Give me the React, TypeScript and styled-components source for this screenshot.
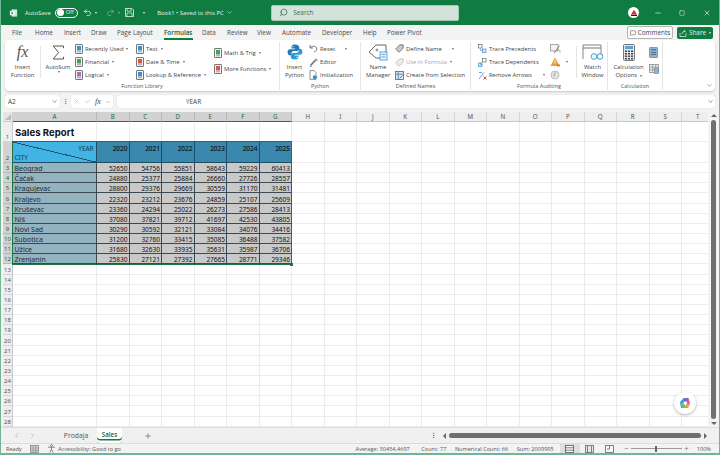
import React from "react";
import styled, { createGlobalStyle, css } from "styled-components";
import {
    ChevronDown,
    ChevronLeft,
    ChevronRight,
    Check,
    Minus,
    MessageSquare,
    MoreVertical,
    Plus,
    Redo2,
    Search,
    Square,
    Undo2,
    X,
} from "lucide-react";

const UI_FONT = `"Open Sans", "Noto Sans", sans-serif`;
const GREEN = "#107c41";

const GlobalStyle = createGlobalStyle`
    html, body {
        margin: 0;
        padding: 0;
        width: 720px;
        height: 455px;
        overflow: hidden;
        background: #f3f3f3;
    }
    * {
        box-sizing: border-box;
    }
`;

const Window = styled.div`
    width: 720px;
    height: 455px;
    display: flex;
    flex-direction: column;
    background: #f3f3f3;
    border-left: 1px solid #6fb596;
    border-right: 1px solid #6fb596;
    border-bottom: 2px solid #6fb596;
    font-family: ${UI_FONT};
    font-size: 6.4px;
    color: #444;
    overflow: hidden;
`;

/* title bar */

const TitleBar = styled.div`
    height: 25px;
    flex: none;
    background: ${GREEN};
    color: #e8f2ec;
    display: flex;
    align-items: center;
    padding-left: 8px;
    font-size: 5.9px;
`;

const AppBadge = styled.div`
    width: 9px;
    height: 9px;
    margin-right: 7px;
    display: flex;
    align-items: center;
    justify-content: center;
`;

const Toggle = styled.div`
    width: 23px;
    height: 10px;
    margin-left: 4px;
    margin-right: 5px;
    border: 1px solid #fff;
    border-radius: 6px;
    display: flex;
    align-items: center;
    padding-left: 1px;
    gap: 2px;
    font-size: 5.6px;
    line-height: 1;
    &::before {
        content: "";
        width: 7px;
        height: 7px;
        border-radius: 50%;
        background: #fff;
    }
`;

const QuickIcons = styled.div`
    display: flex;
    align-items: center;
    gap: 2px;
    width: 74.5px;
    flex: none;
`;

const QuickGap = styled.span<{ $width: number }>`
    width: ${(p) => p.$width}px;
    flex: none;
`;

const DocTitle = styled.div`
    width: 114px;
    flex: none;
    display: flex;
    align-items: center;
    gap: 2px;
    white-space: nowrap;
`;

const SearchBox = styled.div`
    width: 188px;
    height: 16px;
    background: #d2e4d9;
    border: 1px solid #a7c9b5;
    border-radius: 2px;
    display: flex;
    align-items: center;
    gap: 5px;
    padding-left: 7px;
    font-size: 6.4px;
    color: #3c6a50;
`;

const TitleRight = styled.div`
    margin-left: auto;
    display: flex;
    align-items: center;
`;

const Avatar = styled.div`
    width: 11px;
    height: 11px;
    border-radius: 50%;
    background: #fff;
    display: flex;
    align-items: center;
    justify-content: center;
    margin-right: 6.5px;
`;

const WindowButton = styled.div`
    width: 24.5px;
    display: flex;
    justify-content: center;
`;

/* ribbon tabs */

const TabBar = styled.div`
    height: 15px;
    flex: none;
    display: flex;
    align-items: center;
    padding-left: 11px;
    font-size: 6.3px;
    color: #4a4a4a;
`;

const RibbonTab = styled.div<{ $width: number; $active?: boolean }>`
    width: ${(p) => p.$width}px;
    height: 15px;
    line-height: 15px;
    flex: none;
    white-space: nowrap;
    ${(p) =>
        p.$active &&
        css`
            font-weight: 600;
            color: #1d5c3a;
        `}
`;

const TabUnderline = styled.div`
    width: 29px;
    height: 1.5px;
    background: ${GREEN};
    margin-top: -2px;
`;

const TabActions = styled.div`
    margin-left: auto;
    display: flex;
    align-items: center;
    gap: 4px;
    padding-right: 6px;
    font-size: 6.4px;
`;

const CommentsButton = styled.div`
    width: 46px;
    height: 13px;
    background: #fafafa;
    border: 1px solid #b5b5b5;
    border-radius: 2px;
    display: flex;
    align-items: center;
    justify-content: center;
    gap: 2px;
`;

const ShareButton = styled.div`
    width: 36px;
    height: 12px;
    background: ${GREEN};
    color: #e8f2ec;
    border-radius: 2px;
    display: flex;
    align-items: center;
    justify-content: center;
    gap: 2px;
`;

/* ribbon */

const Ribbon = styled.div`
    height: 51px;
    flex: none;
    margin: 0 4px;
    background: #fff;
    border-radius: 4px;
    box-shadow: 0 1px 2px rgba(0, 0, 0, 0.18);
    display: flex;
    position: relative;
    font-size: 5.85px;
`;

const Group = styled.div<{ $width: number }>`
    width: ${(p) => p.$width}px;
    flex: none;
    display: flex;
    flex-direction: column;
    margin: 2px 0 1px;
    border-right: 1px solid #e4e4e4;
`;

const GroupBody = styled.div`
    height: 40px;
    flex: none;
    display: flex;
`;

const GroupLabel = styled.div`
    height: 8px;
    line-height: 8px;
    text-align: center;
    font-size: 5.5px;
    color: #555;
`;

const LargeCommand = styled.div<{ $width: number }>`
    width: ${(p) => p.$width}px;
    flex: none;
    display: flex;
    flex-direction: column;
    align-items: center;
    text-align: center;
    line-height: 8px;
    padding-top: 1px;
`;

const LargeIcon = styled.div`
    height: 18px;
    margin-bottom: 1.5px;
    display: flex;
    align-items: center;
    justify-content: center;
`;

const InnerDivider = styled.div`
    width: 1px;
    height: 32px;
    margin-top: 4px;
    background: #e4e4e4;
    flex: none;
`;

const Stack = styled.div<{ $width?: number; $spread?: boolean; $inset?: number }>`
    ${(p) => (p.$width ? `width: ${p.$width}px; flex: none;` : "flex: 1;")}
    display: flex;
    flex-direction: column;
    justify-content: ${(p) => (p.$spread ? "center" : "flex-start")};
    gap: ${(p) => (p.$spread ? "3px" : "0")};
    padding-bottom: ${(p) => (p.$spread ? "2px" : "0")};
    padding-left: ${(p) => p.$inset ?? 0}px;
`;

const SmallCommand = styled.div<{ $disabled?: boolean }>`
    height: 13.4px;
    flex: none;
    display: flex;
    align-items: center;
    gap: 2px;
    white-space: nowrap;
    color: ${(p) => (p.$disabled ? "#a8a8a8" : "#444")};
`;

const Caret = styled.span<{ $color?: string; $offset?: number }>`
    width: 0;
    height: 0;
    margin-left: ${(p) => p.$offset ?? 1}px;
    border-left: 1.6px solid transparent;
    border-right: 1.6px solid transparent;
    border-top: 2px solid ${(p) => p.$color ?? "#666"};
    display: inline-block;
    flex: none;
`;

const CollapseRibbon = styled.div`
    position: absolute;
    right: 2px;
    bottom: 2px;
    color: #666;
    display: flex;
`;

/* formula bar */

const FormulaBar = styled.div`
    height: 13px;
    flex: none;
    margin: 4px;
    display: flex;
    align-items: stretch;
`;

const NameBox = styled.div`
    width: 55px;
    background: #fff;
    border-radius: 2px;
    box-shadow: 0 0 1px rgba(0, 0, 0, 0.25);
    display: flex;
    align-items: center;
    justify-content: space-between;
    padding: 0 2px 0 3px;
`;

const BarGrip = styled.div`
    width: 11px;
    display: flex;
    align-items: center;
    justify-content: center;
    color: #777;
`;

const FormulaActions = styled.div`
    width: 42px;
    background: #fff;
    border-radius: 2px;
    box-shadow: 0 0 1px rgba(0, 0, 0, 0.25);
    display: flex;
    align-items: center;
    gap: 4px;
    padding-left: 2px;
    color: #bbb;
`;

const FxMark = styled.span`
    font-family: "Liberation Serif", serif;
    font-style: italic;
    font-size: 8px;
    color: #444;
`;

const FormulaInput = styled.div`
    flex: 1;
    margin-left: 4px;
    background: #fff;
    border-radius: 2px;
    box-shadow: 0 0 1px rgba(0, 0, 0, 0.25);
    display: flex;
    align-items: center;
    justify-content: space-between;
    padding: 0 1px 0 69px;
`;

/* sheet */

const SheetArea = styled.div`
    flex: 1;
    min-height: 0;
    display: flex;
    margin-left: 2px;
    background: #fff;
    position: relative;
`;

const SheetGrid = styled.div`
    flex: 1;
    min-width: 0;
    overflow: hidden;
    position: relative;
    display: grid;
    grid-template-columns: 10px 84px repeat(19, 32.5px);
    grid-template-rows: 10px 20px 21px repeat(26, 10.15px);
    align-content: start;
    font-family: "Noto Sans", "Open Sans", sans-serif;
    font-size: 6.5px;
    color: #111;
`;

const CornerCell = styled.div`
    background: #e6e6e6;
    border-right: 1px solid #cfcfcf;
    border-bottom: 1px solid #cfcfcf;
    display: flex;
    align-items: flex-end;
    justify-content: flex-end;
    padding: 0 1px 1px 0;
    &::after {
        content: "";
        border-left: 6px solid transparent;
        border-bottom: 6px solid #bdbdbd;
    }
`;

const ColHead = styled.div<{ $selected: boolean }>`
    background: ${(p) => (p.$selected ? "#d2d2d2" : "#eeeeee")};
    border-right: 1px solid ${(p) => (p.$selected ? "#b8b8b8" : "#d5d5d5")};
    border-bottom: 1px solid ${(p) => (p.$selected ? "#217346" : "#c8c8c8")};
    color: ${(p) => (p.$selected ? "#1c6a41" : "#555")};
    display: flex;
    align-items: center;
    justify-content: center;
    font-size: 6.2px;
    overflow: hidden;
`;

const RowHead = styled.div<{ $selected: boolean }>`
    background: ${(p) => (p.$selected ? "#d2d2d2" : "#eeeeee")};
    border-right: 1px solid ${(p) => (p.$selected ? "#217346" : "#c8c8c8")};
    border-bottom: 1px solid ${(p) => (p.$selected ? "#b8b8b8" : "#d5d5d5")};
    color: ${(p) => (p.$selected ? "#1c6a41" : "#555")};
    display: flex;
    align-items: flex-end;
    justify-content: center;
    font-size: 6px;
    line-height: 7px;
    overflow: hidden;
`;

const Blank = styled.div`
    border-right: 1px solid #ececec;
    border-bottom: 1px solid #ececec;
`;

const TitleCell = styled(Blank)`
    font-family: "Inter", "Noto Sans", sans-serif;
    font-weight: 700;
    font-size: 9.6px;
    color: #111;
    display: flex;
    align-items: center;
    padding-left: 2px;
    padding-top: 2px;
    white-space: nowrap;
`;

const DataCell = styled.div<{ $variant: "year" | "city" | "num" }>`
    display: flex;
    padding: 0 1px 0 1.5px;
    line-height: 7px;
    white-space: nowrap;
    overflow: hidden;
    border-right: 1px solid #3d4a52;
    border-bottom: 1px solid #3d4a52;
    ${(p) =>
        p.$variant === "year" &&
        css`
            background: #3a88ad;
            justify-content: flex-end;
            font-weight: 500;
            padding-top: 2.5px;
            border-right-color: #1f4d66;
            border-bottom-color: #1f4d66;
        `}
    ${(p) =>
        p.$variant === "city" &&
        css`
            background: #94b3c1;
            align-items: flex-end;
            color: #1f2c33;
            font-size: 7px;
        `}
    ${(p) =>
        p.$variant === "num" &&
        css`
            background: #c9c9c9;
            justify-content: flex-end;
            align-items: flex-end;
        `}
`;

const DiagonalCell = styled.div`
    background:
        linear-gradient(
            to top right,
            transparent calc(50% - 0.6px),
            #24506a calc(50% - 0.6px),
            #24506a calc(50% + 0.4px),
            transparent calc(50% + 0.4px)
        ),
        #41b3e4;
    border-right: 1px solid #1f4d66;
    border-bottom: 1px solid #1f4d66;
    color: #1c3a4c;
    display: flex;
    flex-direction: column;
    justify-content: space-between;
    padding: 1px 1.5px 0;
    line-height: 8px;
    font-size: 6.4px;
`;

const YearLabel = styled.div`
    text-align: right;
    padding-right: 1px;
    margin-top: 2px;
`;

const Selection = styled.div`
    position: absolute;
    inset: -1px 0 -1px -1px;
    grid-column: 2 / 9;
    grid-row: 3 / 14;
    border: 1px solid #217346;
    pointer-events: none;
    &::after {
        content: "";
        position: absolute;
        right: -2px;
        bottom: -2px;
        width: 3px;
        height: 3px;
        background: #217346;
    }
`;

const VScroll = styled.div`
    width: 11px;
    flex: none;
    display: flex;
    flex-direction: column;
    align-items: center;
    background: #f3f3f3;
    padding: 2px 0;
    gap: 3px;
`;

const VThumb = styled.div`
    flex: 1;
    width: 5px;
    background: #6f6f6f;
    border-radius: 3px;
`;

const ArrowUp = styled.div`
    border-left: 3px solid transparent;
    border-right: 3px solid transparent;
    border-bottom: 3.5px solid #666;
    flex: none;
`;

const ArrowDown = styled.div`
    border-left: 3px solid transparent;
    border-right: 3px solid transparent;
    border-top: 3.5px solid #666;
    flex: none;
`;

const CopilotButton = styled.div`
    position: absolute;
    right: 23px;
    bottom: 13px;
    width: 22px;
    height: 22px;
    border-radius: 50%;
    background: #fff;
    box-shadow: 0 1px 3px rgba(0, 0, 0, 0.3);
    display: flex;
    align-items: center;
    justify-content: center;
`;

/* sheet tabs and status bar */

const SheetTabs = styled.div`
    height: 16px;
    flex: none;
    display: flex;
    align-items: center;
    background: #f0f0f0;
    border-top: 1px solid #dedede;
    padding-left: 12px;
    color: #999;
`;

const NavArrows = styled.div`
    width: 47px;
    flex: none;
    display: flex;
    gap: 9px;
`;

const SheetTab = styled.div<{ $active?: boolean; $width: number }>`
    width: ${(p) => p.$width}px;
    height: 15px;
    flex: none;
    display: flex;
    align-items: center;
    justify-content: center;
    font-size: 6.8px;
    color: #555;
    margin-right: ${(p) => (p.$active ? 0 : 5)}px;
    ${(p) =>
        p.$active &&
        css`
            background: #fff;
            color: #1d5c3a;
            font-weight: 600;
            border-radius: 0 0 3px 3px;
            box-shadow: inset 0 -2.5px 0 #fff, inset 0 -4px 0 ${GREEN};
            font-size: 6.2px;
            padding-bottom: 2px;
        `}
`;

const AddSheet = styled.div`
    margin-left: 22px;
    display: flex;
    color: #666;
`;

const HScrollArea = styled.div`
    margin-left: auto;
    display: flex;
    align-items: center;
    gap: 3px;
    width: 289px;
    padding-right: 12px;
    color: #666;
    & > svg {
        margin-right: 3px;
    }
`;

const HThumb = styled.div`
    flex: 1;
    height: 5px;
    background: #6f6f6f;
    border-radius: 3px;
`;

const ArrowLeft = styled.div`
    border-top: 3px solid transparent;
    border-bottom: 3px solid transparent;
    border-right: 3.5px solid #666;
    flex: none;
`;

const ArrowRight = styled.div`
    border-top: 3px solid transparent;
    border-bottom: 3px solid transparent;
    border-left: 3.5px solid #666;
    flex: none;
`;

const StatusBar = styled.div`
    height: 10px;
    flex: none;
    display: flex;
    align-items: center;
    border-top: 1px solid #dcdcdc;
    background: #f3f3f3;
    padding-left: 5px;
    font-size: 5.6px;
    color: #555;
    white-space: nowrap;
`;

const StatusLeft = styled.div`
    display: flex;
    align-items: center;
    gap: 8px;
`;

const Accessibility = styled.div`
    display: flex;
    align-items: center;
    gap: 2px;
`;

const StatusStats = styled.div`
    margin-left: auto;
    display: flex;
    align-items: center;
    gap: 8.5px;
`;

const AverageStat = styled.span`
    margin-right: 3px;
`;

const ViewButtons = styled.div`
    margin-left: 6px;
    display: flex;
    align-items: center;
`;

const ViewButton = styled.div<{ $active?: boolean }>`
    width: 20px;
    height: 9px;
    display: flex;
    align-items: center;
    justify-content: center;
    background: ${(p) => (p.$active ? "#dedede" : "transparent")};
`;

const Zoom = styled.div`
    margin-left: 4px;
    display: flex;
    align-items: center;
    gap: 2px;
    padding-right: 8px;
`;

const ZoomTrack = styled.div`
    width: 51px;
    height: 1px;
    background: #999;
    display: flex;
    align-items: center;
    justify-content: center;
    &::after {
        content: "";
        width: 2px;
        height: 6px;
        background: #666;
    }
`;

const ZoomValue = styled.span`
    margin-left: 6px;
`;

/* icons */

const Book = ({ color }: { color: string }) => (
    <svg width="8" height="10" viewBox="0 0 8 10">
        <rect x="0.5" y="0.5" width="7" height="9" rx="0.5" fill="#f4f4f4" stroke="#777" />
        <rect x="2" y="2" width="4" height="4.5" fill={color} />
        <rect x="2" y="7.3" width="4" height="0.9" fill="#999" />
    </svg>
);

const Sigma = () => (
    <svg width="13" height="15" viewBox="0 0 13 15" fill="none">
        <path d="M11.5 3.2V1H1.2L6.6 7.4 1.2 14H11.5V11.8" stroke="#555" strokeWidth="1" />
    </svg>
);

const PythonLogo = () => (
    <svg width="16" height="16" viewBox="0 0 16 16">
        <path d="M8 .6C5 .6 4.6 1.7 4.6 3v1.6H8.2v.7H3C1.5 5.3.6 6.3.6 8.2c0 2 .9 3.1 2.4 3.1h1.3V9.5c0-1.3 1.1-2.4 2.5-2.4h3.4c1.1 0 2-.9 2-2V3C11.8 1.6 10.6.6 8 .6Z" fill="#1f7ab8" />
        <path d="M8 15.4c3 0 3.4-1.1 3.4-2.4v-1.6H7.8v-.7H13c1.5 0 2.4-1 2.4-2.9 0-2-.9-3.1-2.4-3.1h-1.3v1.8c0 1.3-1.1 2.4-2.5 2.4H5.8c-1.1 0-2 .9-2 2V13c0 1.4 1.2 2.4 4.2 2.4Z" fill="#2f9ad6" />
        <circle cx="6" cy="2.6" r=".7" fill="#fff" />
        <circle cx="10" cy="13.4" r=".7" fill="#fff" />
    </svg>
);

const ResetIcon = () => (
    <svg width="9" height="9" viewBox="0 0 9 9" fill="none">
        <path d="M1 1v3h3M1.3 3.8C2.6 1.8 6.3 1.5 7.5 3.8 8.3 5.5 7 7.5 5 8" stroke="#666" strokeWidth=".9" />
    </svg>
);

const PencilIcon = () => (
    <svg width="9" height="9" viewBox="0 0 9 9" fill="none">
        <path d="M1.5 7.5 6.5 2.2" stroke="#777" strokeWidth="1.8" />
        <path d="M6 1.2h2v2" stroke="#2f8fd0" strokeWidth=".9" />
        <path d="M1 8.2h1.8" stroke="#2f8fd0" strokeWidth=".9" />
    </svg>
);

const DocIcon = () => (
    <svg width="9" height="10" viewBox="0 0 9 10" fill="none">
        <path d="M1 .6h4l2 2v6.8H1z" fill="#fff" stroke="#666" strokeWidth=".7" />
        <circle cx="5.8" cy="7.2" r="2" fill="#2f8fd0" />
    </svg>
);

const TagIcon = () => (
    <svg width="20" height="18" viewBox="0 0 20 18" fill="none">
        <path d="M1 9 8 2h10v13H8z" fill="#fff" stroke="#666" strokeWidth="1" />
        <circle cx="9" cy="7" r="1" stroke="#666" strokeWidth=".8" />
        <rect x="12" y="9" width="7" height="8" fill="#eaf3fb" stroke="#3d8fd1" strokeWidth=".8" />
        <path d="M13.5 11.5h4M13.5 14h4" stroke="#3d8fd1" strokeWidth=".8" />
    </svg>
);

const SmallTagIcon = ({ dim }: { dim?: boolean }) => (
    <svg width="9" height="9" viewBox="0 0 9 9" fill="none">
        <path d="M.7 5 4.7.8h3.5v3.5L4 8.3z" fill={dim ? "#ececec" : "#c9c9c9"} stroke={dim ? "#bbb" : "#666"} strokeWidth=".8" />
    </svg>
);

const CreateSelectionIcon = () => (
    <svg width="9" height="9" viewBox="0 0 9 9" fill="none">
        <rect x=".5" y=".5" width="8" height="8" fill="#d8e8f5" stroke="#3d6f96" strokeWidth=".8" />
        <path d="M.5 3.2h8M3.2.5v8" stroke="#3d6f96" strokeWidth=".7" />
        <path d="M4.5 7.5 7.5 4.5" stroke="#b34a4a" strokeWidth=".8" />
    </svg>
);

const TraceIcon = ({ flip }: { flip?: boolean }) => (
    <svg width="9" height="9" viewBox="0 0 9 9" fill="none">
        <rect x={flip ? 4.5 : 0.5} y="0.5" width="3.5" height="3.5" fill="#fff" stroke="#666" strokeWidth=".7" />
        <rect x={flip ? 0.5 : 4.5} y="5" width="3.5" height="3.5" fill="#d8e8f5" stroke="#3d8fd1" strokeWidth=".7" />
        <path d="M2.5 4.5v2h2" stroke="#3d8fd1" strokeWidth=".6" />
    </svg>
);

const RemoveArrowsIcon = () => (
    <svg width="9" height="9" viewBox="0 0 9 9" fill="none">
        <path d="M1 8 6 1.5M1 1.5h3" stroke="#3d8fd1" strokeWidth=".8" />
        <path d="M5.5 5.5 8.5 8.5M8.5 5.5 5.5 8.5" stroke="#d13a3a" strokeWidth=".9" />
    </svg>
);

const ShowFormulasIcon = () => (
    <svg width="11" height="10" viewBox="0 0 11 10" fill="none">
        <rect x=".5" y=".5" width="7.5" height="6.5" fill="#f2f2f2" stroke="#888" strokeWidth=".7" />
        <path d="M4 9.5 9.5 1.5" stroke="#666" strokeWidth=".8" />
        <path d="M7 6h3v3" stroke="#999" strokeWidth=".7" />
    </svg>
);

const ErrorCheckIcon = () => (
    <svg width="11" height="10" viewBox="0 0 11 10">
        <path d="M5 .6 9.5 9H.5z" fill="#f0a030" />
        <path d="M5 3.5v3" stroke="#fff" strokeWidth=".9" />
        <path d="M7 7.5 10 9.5M10 7.5 7 9.5" stroke="#3d8f5c" strokeWidth=".8" />
    </svg>
);

const EvalIcon = () => (
    <svg width="10" height="10" viewBox="0 0 10 10" fill="none">
        <circle cx="5" cy="5" r="4" fill="#e8e8e8" stroke="#b0b0b0" strokeWidth=".8" />
        <path d="M4 7V3h2.4M4 5h1.8" stroke="#aaa" strokeWidth=".8" />
    </svg>
);

const WatchIcon = () => (
    <svg width="22" height="17" viewBox="0 0 22 17" fill="none">
        <path d="M1 15V1h18v9" stroke="#777" strokeWidth=".9" />
        <path d="M1 4h18" stroke="#777" strokeWidth="1" />
        <circle cx="12" cy="12.5" r="2.8" fill="#fff" stroke="#3d9bdc" strokeWidth="1" />
        <circle cx="18" cy="12.5" r="2.8" fill="#fff" stroke="#3d9bdc" strokeWidth="1" />
        <path d="M14.8 12.5h.4" stroke="#3d9bdc" />
    </svg>
);

const CalculatorIcon = () => (
    <svg width="12" height="17" viewBox="0 0 12 17">
        <rect x=".5" y=".5" width="11" height="16" rx="1" fill="#e6e6e6" stroke="#777" />
        <rect x="2" y="2" width="8" height="3" fill="#55a5de" />
        {[6.5, 9, 11.5, 14].map((y) =>
            [2, 5, 8].map((x) => <rect key={`${x}-${y}`} x={x} y={y} width="2" height="1.5" fill="#444" />),
        )}
    </svg>
);

const CalcNowIcon = () => (
    <svg width="9" height="11" viewBox="0 0 9 11">
        <rect x=".5" y=".5" width="8" height="10" rx=".6" fill="#8fb4cf" stroke="#777" strokeWidth=".7" />
        <rect x="2" y="2" width="5" height="1.5" fill="#3b83b8" />
        <path d="M2 5.5h5M2 7.5h5" stroke="#556" strokeWidth=".8" />
    </svg>
);

const CalcSheetIcon = () => (
    <svg width="10" height="10" viewBox="0 0 11 11" fill="none">
        <rect x=".5" y=".5" width="10" height="9" fill="#f0f0f0" stroke="#777" strokeWidth=".7" />
        <path d="M.5 3.5h10M.5 6.5h10M4 .5v9M7.5.5v9" stroke="#777" strokeWidth=".7" />
        <rect x="6" y="5" width="4.5" height="5.5" fill="#8fb4cf" stroke="#667" strokeWidth=".5" />
    </svg>
);

const ExcelBadge = () => (
    <svg width="10" height="10" viewBox="0 0 10 10">
        <rect x="3" y="1" width="6" height="8" fill="#cfe5d8" />
        <rect x="1" y="2.5" width="5" height="5" fill="#fff" />
        <path d="M2.5 3.5 4.5 6.5M4.5 3.5 2.5 6.5" stroke={GREEN} strokeWidth=".8" />
    </svg>
);

const SaveIcon = () => (
    <svg width="9" height="9" viewBox="0 0 9 9" fill="none">
        <path d="M.5.5H7L8.5 2v6.5h-8z" stroke="#e8f2ec" strokeWidth=".8" />
        <path d="M2.2.8v2.4h4V.8M2 8.3V5h5v3.3" stroke="#e8f2ec" strokeWidth=".7" />
    </svg>
);

const AvatarMark = () => (
    <svg width="8" height="8" viewBox="0 0 8 8">
        <path d="M4 .8 7 5.5H1z" fill="#d8321f" />
        <path d="M1 5.8h6V7H1z" fill="#222" />
    </svg>
);

const CopilotLogo = () => (
    <svg width="12" height="12" viewBox="0 0 12 12">
        <path d="M1 5 4.5 1H8L5.5 6 3.5 11H2z" fill="#3a9be0" />
        <path d="M1 6 3 11h4L5 6z" fill="#5cc46a" />
        <path d="M8 1h1.5L11 6 8.5 11H5.5L8 6z" fill="#e85aa8" />
        <path d="M6.5 1H9.5L8 5 5 4z" fill="#8a5be0" />
        <path d="M7 7h4l-2 4H6z" fill="#f0a03a" />
        <circle cx="6" cy="6" r="1.5" fill="#fff" />
    </svg>
);

const MacroIcon = () => (
    <svg width="9" height="8" viewBox="0 0 9 8">
        <rect x=".5" y=".5" width="8" height="7" fill="#d8d8d8" stroke="#777" strokeWidth=".7" />
        <path d="M.5 3h8M.5 5.3h8M3.2.5v7M5.8.5v7" stroke="#777" strokeWidth=".5" />
    </svg>
);

const AccessIcon = () => (
    <svg width="9" height="9" viewBox="0 0 9 9" fill="none">
        <circle cx="4.5" cy="1.5" r="1" stroke="#666" strokeWidth=".7" />
        <path d="M1 3.2h7M4.5 3.2v2.3L2.8 8.5M4.5 5.5 6.2 8.5" stroke="#666" strokeWidth=".8" />
    </svg>
);

const NormalViewIcon = () => (
    <svg width="9" height="8" viewBox="0 0 9 8" fill="none">
        <rect x=".5" y=".5" width="8" height="7" fill="#fff" stroke="#555" strokeWidth=".8" />
        <path d="M.5 2.8h8M.5 5.2h8" stroke="#555" strokeWidth=".8" />
    </svg>
);

const LayoutViewIcon = () => (
    <svg width="9" height="8" viewBox="0 0 9 8" fill="none">
        <rect x=".5" y=".5" width="8" height="7" fill="#e6e6e6" stroke="#666" strokeWidth=".8" />
        <path d="M2.5.5v7M6.5.5v7" stroke="#666" strokeWidth=".8" />
    </svg>
);

const BreakViewIcon = () => (
    <svg width="9" height="8" viewBox="0 0 9 8" fill="none">
        <rect x=".5" y=".5" width="8" height="7" fill="#f8f8f8" stroke="#666" strokeWidth=".8" />
        <path d="M4.5.5V4H2" stroke="#666" strokeWidth=".8" />
    </svg>
);

const ShareIcon = () => (
    <svg width="8" height="8" viewBox="0 0 8 8" fill="none">
        <path d="M1 4v3.5h6V4" stroke="#e8f2ec" strokeWidth=".7" />
        <path d="M3 5C3 3 4.5 2.2 6 2.2M5 1l1.3 1.2L5 3.5" stroke="#e8f2ec" strokeWidth=".7" />
    </svg>
);

const CommandFx = styled.span`
    font-family: "Liberation Serif", serif;
    font-style: italic;
    font-size: 16px;
    line-height: 1;
    color: #555;
`;

const MirroredSearch = styled(Search)`
    transform: scaleX(-1);
`;

/* data */

const COLUMNS = "ABCDEFGHIJKLMNOPQRST".split("");
const TOTAL_ROWS = 28;
const YEARS = [2020, 2021, 2022, 2023, 2024, 2025];

const SALES: [string, number[]][] = [
    ["Beograd", [52650, 54756, 55851, 58643, 59229, 60413]],
    ["Čačak", [24880, 25377, 25884, 26660, 27726, 28557]],
    ["Kragujevac", [28800, 29376, 29669, 30559, 31170, 31481]],
    ["Kraljevo", [22320, 23212, 23676, 24859, 25107, 25609]],
    ["Kruševac", [23360, 24294, 25022, 26273, 27586, 28413]],
    ["Niš", [37080, 37821, 39712, 41697, 42530, 43805]],
    ["Novi Sad", [30290, 30592, 32121, 33084, 34076, 34416]],
    ["Subotica", [31200, 32760, 33415, 35085, 36488, 37582]],
    ["Užice", [31680, 32630, 33935, 35631, 35987, 36706]],
    ["Zrenjanin", [25830, 27121, 27392, 27665, 28771, 29346]],
];

const TABS: [string, number][] = [
    ["File", 23],
    ["Home", 29],
    ["Insert", 27],
    ["Draw", 26],
    ["Page Layout", 47],
    ["Formulas", 38],
    ["Data", 25],
    ["Review", 30],
    ["View", 25],
    ["Automate", 40],
    ["Developer", 41],
    ["Help", 24],
    ["Power Pivot", 50],
];

const Blanks = ({ count }: { count: number }) => (
    <>
        {Array.from({ length: count }, (_, i) => (
            <Blank key={i} />
        ))}
    </>
);

const Sheet = () => (
    <SheetGrid>
        <CornerCell />
        {COLUMNS.map((col, i) => (
            <ColHead key={col} $selected={i < 7}>
                {col}
            </ColHead>
        ))}

        <RowHead $selected={false}>1</RowHead>
        <TitleCell>Sales Report</TitleCell>
        <Blanks count={19} />

        <RowHead $selected>2</RowHead>
        <DiagonalCell>
            <YearLabel>YEAR</YearLabel>
            <div>CITY</div>
        </DiagonalCell>
        {YEARS.map((year) => (
            <DataCell key={year} $variant="year">
                {year}
            </DataCell>
        ))}
        <Blanks count={13} />

        {SALES.map(([city, values], i) => (
            <React.Fragment key={city}>
                <RowHead $selected>{i + 3}</RowHead>
                <DataCell $variant="city">{city}</DataCell>
                {values.map((value) => (
                    <DataCell key={value} $variant="num">
                        {value}
                    </DataCell>
                ))}
                <Blanks count={13} />
            </React.Fragment>
        ))}

        {Array.from({ length: TOTAL_ROWS - 12 }, (_, i) => (
            <React.Fragment key={i}>
                <RowHead $selected={false}>{i + 13}</RowHead>
                <Blanks count={20} />
            </React.Fragment>
        ))}

        <Selection />
    </SheetGrid>
);

const FunctionRibbon = () => (
    <Ribbon>
        <Group $width={275}>
            <GroupBody>
                <LargeCommand $width={35}>
                    <LargeIcon>
                        <CommandFx>fx</CommandFx>
                    </LargeIcon>
                    Insert
                    <br />
                    Function
                </LargeCommand>
                <InnerDivider />
                <LargeCommand $width={34}>
                    <LargeIcon>
                        <Sigma />
                    </LargeIcon>
                    AutoSum
                    <br />
                    <Caret />
                </LargeCommand>
                <Stack $width={61}>
                    <SmallCommand><Book color="#3d8fd1" />Recently Used<Caret /></SmallCommand>
                    <SmallCommand><Book color="#3fa35f" />Financial<Caret /></SmallCommand>
                    <SmallCommand><Book color="#b06ac0" />Logical<Caret /></SmallCommand>
                </Stack>
                <Stack $width={78}>
                    <SmallCommand><Book color="#3d8fd1" />Text<Caret /></SmallCommand>
                    <SmallCommand><Book color="#d9534f" />Date &amp; Time<Caret /></SmallCommand>
                    <SmallCommand><Book color="#3d8fd1" />Lookup &amp; Reference<Caret /></SmallCommand>
                </Stack>
                <Stack $spread>
                    <SmallCommand><Book color="#3fa35f" />Math &amp; Trig<Caret /></SmallCommand>
                    <SmallCommand><Book color="#d9534f" />More Functions<Caret /></SmallCommand>
                </Stack>
            </GroupBody>
            <GroupLabel>Function Library</GroupLabel>
        </Group>

        <Group $width={81}>
            <GroupBody>
                <LargeCommand $width={29}>
                    <LargeIcon>
                        <PythonLogo />
                    </LargeIcon>
                    Insert
                    <br />
                    Python
                </LargeCommand>
                <Stack>
                    <SmallCommand><ResetIcon />Reset<Caret $offset={8} /></SmallCommand>
                    <SmallCommand><PencilIcon />Editor</SmallCommand>
                    <SmallCommand><DocIcon />Initialization</SmallCommand>
                </Stack>
            </GroupBody>
            <GroupLabel>Python</GroupLabel>
        </Group>

        <Group $width={110}>
            <GroupBody>
                <LargeCommand $width={34}>
                    <LargeIcon>
                        <TagIcon />
                    </LargeIcon>
                    Name
                    <br />
                    Manager
                </LargeCommand>
                <Stack>
                    <SmallCommand><SmallTagIcon />Define Name<Caret $offset={8} /></SmallCommand>
                    <SmallCommand $disabled><SmallTagIcon dim />Use in Formula<Caret /></SmallCommand>
                    <SmallCommand><CreateSelectionIcon />Create from Selection</SmallCommand>
                </Stack>
            </GroupBody>
            <GroupLabel>Defined Names</GroupLabel>
        </Group>

        <Group $width={137}>
            <GroupBody>
                <Stack $width={79} $inset={7}>
                    <SmallCommand><TraceIcon />Trace Precedents</SmallCommand>
                    <SmallCommand><TraceIcon flip />Trace Dependents</SmallCommand>
                    <SmallCommand><RemoveArrowsIcon />Remove Arrows<Caret $offset={9} /></SmallCommand>
                </Stack>
                <Stack $width={26}>
                    <SmallCommand><ShowFormulasIcon /></SmallCommand>
                    <SmallCommand><ErrorCheckIcon /><Caret $offset={3} /></SmallCommand>
                    <SmallCommand><EvalIcon /></SmallCommand>
                </Stack>
                <InnerDivider />
                <LargeCommand $width={31}>
                    <LargeIcon>
                        <WatchIcon />
                    </LargeIcon>
                    Watch
                    <br />
                    Window
                </LargeCommand>
            </GroupBody>
            <GroupLabel>Formula Auditing</GroupLabel>
        </Group>

        <Group $width={55}>
            <GroupBody>
                <LargeCommand $width={41}>
                    <LargeIcon>
                        <CalculatorIcon />
                    </LargeIcon>
                    Calculation
                    <br />
                    <span>Options <Caret /></span>
                </LargeCommand>
                <Stack $spread>
                    <SmallCommand><CalcNowIcon /></SmallCommand>
                    <SmallCommand><CalcSheetIcon /></SmallCommand>
                </Stack>
            </GroupBody>
            <GroupLabel>Calculation</GroupLabel>
        </Group>

        <CollapseRibbon>
            <ChevronDown size={7} />
        </CollapseRibbon>
    </Ribbon>
);

export default function App() {
    return (
        <>
            <GlobalStyle />
            <Window>
                <TitleBar>
                    <AppBadge>
                        <ExcelBadge />
                    </AppBadge>
                    AutoSave
                    <Toggle>Off</Toggle>
                    <QuickIcons>
                        <Undo2 size={9} />
                        <Caret $color="#e8f2ec" />
                        <QuickGap $width={5} />
                        <Redo2 size={9} opacity={0.45} />
                        <Caret $color="#7fb89d" />
                        <QuickGap $width={1} />
                        <SaveIcon />
                        <QuickGap $width={4} />
                        <Caret $color="#e8f2ec" />
                    </QuickIcons>
                    <DocTitle>
                        Book1 • Saved to this PC
                        <ChevronDown size={7} />
                    </DocTitle>
                    <SearchBox>
                        <MirroredSearch size={9} />
                        Search
                    </SearchBox>
                    <TitleRight>
                        <Avatar>
                            <AvatarMark />
                        </Avatar>
                        <WindowButton>
                            <Minus size={8} />
                        </WindowButton>
                        <WindowButton>
                            <Square size={6} />
                        </WindowButton>
                        <WindowButton>
                            <X size={8} />
                        </WindowButton>
                    </TitleRight>
                </TitleBar>

                <TabBar>
                    {TABS.map(([name, width]) => (
                        <RibbonTab key={name} $width={width} $active={name === "Formulas"}>
                            {name}
                            {name === "Formulas" && <TabUnderline />}
                        </RibbonTab>
                    ))}
                    <TabActions>
                        <CommentsButton>
                            <MessageSquare size={6} />
                            Comments
                        </CommentsButton>
                        <ShareButton>
                            <ShareIcon />
                            Share
                            <Caret $color="#e8f2ec" />
                        </ShareButton>
                    </TabActions>
                </TabBar>

                <FunctionRibbon />

                <FormulaBar>
                    <NameBox>
                        A2
                        <ChevronDown size={7} />
                    </NameBox>
                    <BarGrip>
                        <MoreVertical size={7} />
                    </BarGrip>
                    <FormulaActions>
                        <X size={7} />
                        <Check size={7} />
                        <FxMark>fx</FxMark>
                        <ChevronDown size={6} color="#888" />
                    </FormulaActions>
                    <FormulaInput>
                        YEAR
                        <ChevronDown size={7} />
                    </FormulaInput>
                </FormulaBar>

                <SheetArea>
                    <Sheet />
                    <VScroll>
                        <ArrowUp />
                        <VThumb />
                        <ArrowDown />
                    </VScroll>
                    <CopilotButton>
                        <CopilotLogo />
                    </CopilotButton>
                </SheetArea>

                <SheetTabs>
                    <NavArrows>
                        <ChevronLeft size={7} />
                        <ChevronRight size={7} />
                    </NavArrows>
                    <SheetTab $width={32}>Prodaja</SheetTab>
                    <SheetTab $width={25} $active>Sales</SheetTab>
                    <AddSheet>
                        <Plus size={8} />
                    </AddSheet>
                    <HScrollArea>
                        <MoreVertical size={7} />
                        <ArrowLeft />
                        <HThumb />
                        <ArrowRight />
                    </HScrollArea>
                </SheetTabs>

                <StatusBar>
                    <StatusLeft>
                        Ready
                        <MacroIcon />
                        <Accessibility>
                            <AccessIcon />
                            Accessibility: Good to go
                        </Accessibility>
                    </StatusLeft>
                    <StatusStats>
                        <AverageStat>Average: 30454,4697</AverageStat>
                        <span>Count: 77</span>
                        <span>Numerical Count: 66</span>
                        <span>Sum: 2009995</span>
                    </StatusStats>
                    <ViewButtons>
                        <ViewButton $active><NormalViewIcon /></ViewButton>
                        <ViewButton><LayoutViewIcon /></ViewButton>
                        <ViewButton><BreakViewIcon /></ViewButton>
                    </ViewButtons>
                    <Zoom>
                        <Minus size={5} />
                        <ZoomTrack />
                        <Plus size={5} />
                        <ZoomValue>100%</ZoomValue>
                    </Zoom>
                </StatusBar>
            </Window>
        </>
    );
}
